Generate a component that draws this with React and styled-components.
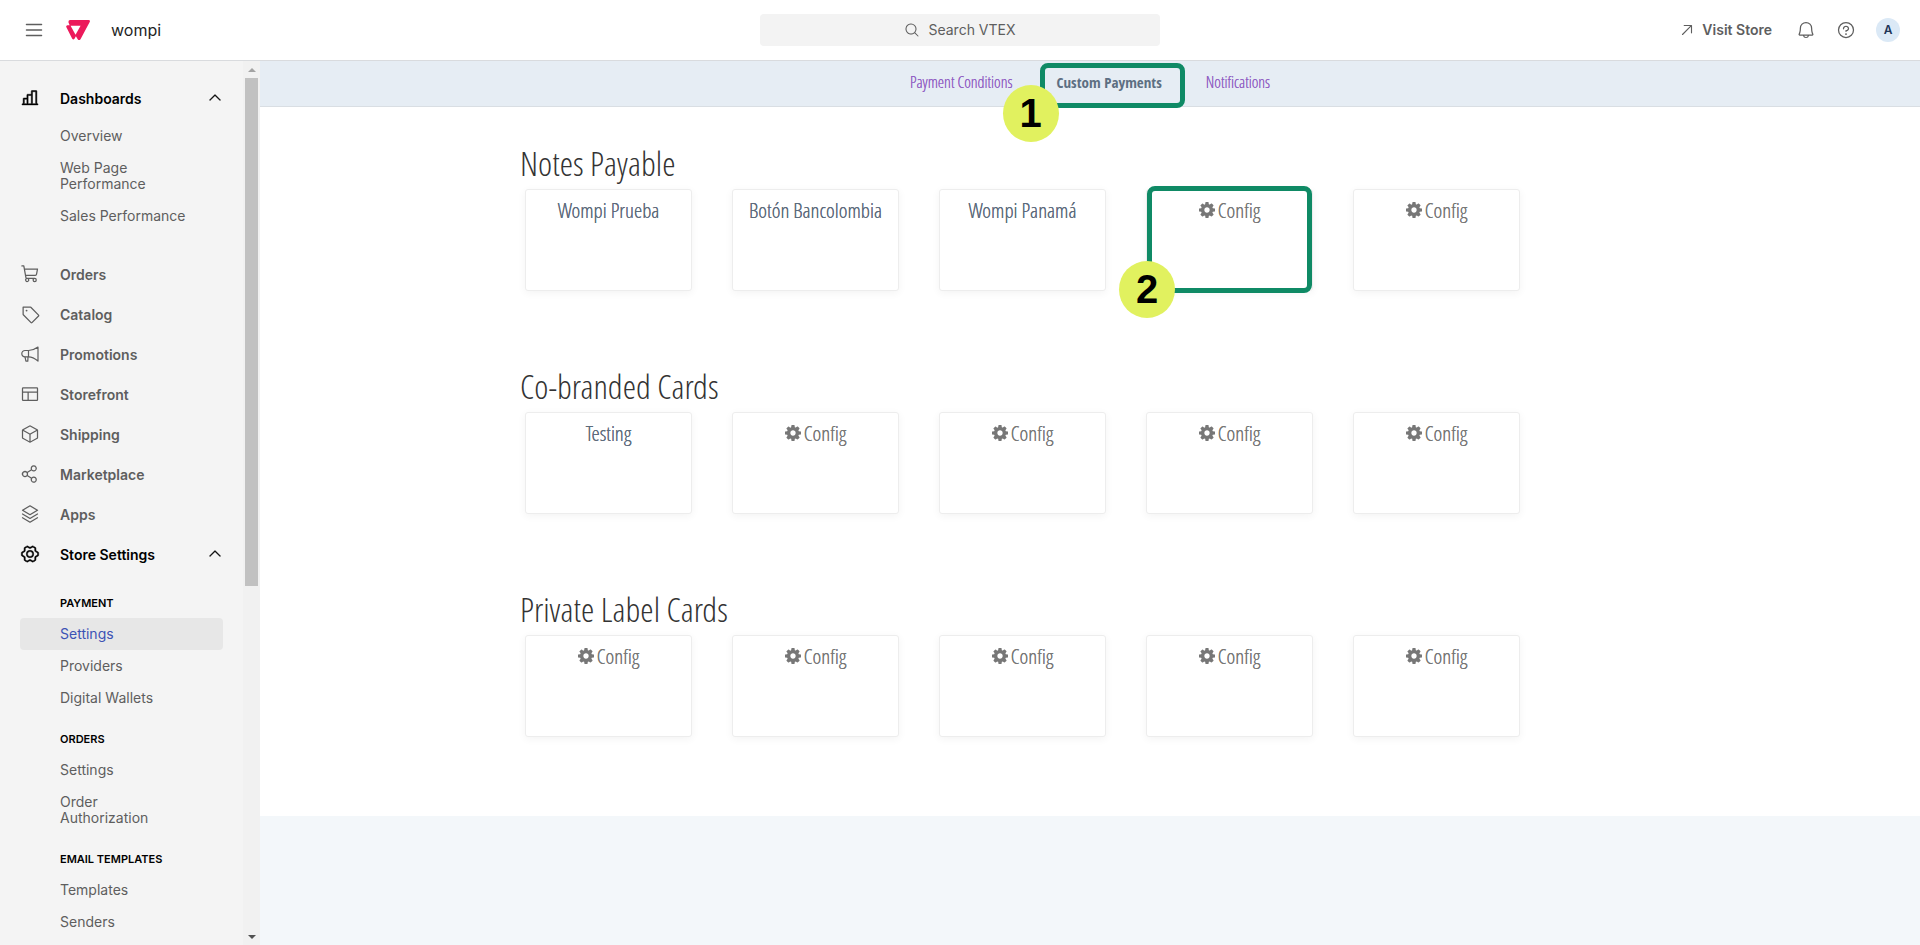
import styled, { createGlobalStyle } from 'styled-components'
import {
	PiArrowUpRight,
	PiBell,
	PiCaretUp,
	PiChartBar,
	PiCube,
	PiGearSix,
	PiLayout,
	PiList,
	PiMagnifyingGlass,
	PiQuestion,
	PiShareNetwork,
	PiShoppingCart,
	PiStack,
	PiTag
} from 'react-icons/pi'

const DASHBOARD_LINKS = ['Overview', 'Web Page Performance', 'Sales Performance']

const MENU = [
	{ label: 'Orders', Icon: PiShoppingCart },
	{ label: 'Catalog', Icon: PiTag },
	{ label: 'Promotions', Icon: Megaphone },
	{ label: 'Storefront', Icon: PiLayout },
	{ label: 'Shipping', Icon: PiCube },
	{ label: 'Marketplace', Icon: PiShareNetwork },
	{ label: 'Apps', Icon: PiStack }
]

const SETTINGS_GROUPS = [
	{ title: 'Payment', links: ['Settings', 'Providers', 'Digital Wallets'], active: 'Settings' },
	{ title: 'Orders', links: ['Settings', 'Order Authorization'] },
	{ title: 'Email Templates', links: ['Templates', 'Senders'] }
]

const SECTIONS = [
	{ title: 'Notes Payable', cards: ['Wompi Prueba', 'Botón Bancolombia', 'Wompi Panamá', null, null], step: 3 },
	{ title: 'Co-branded Cards', cards: ['Testing', null, null, null, null] },
	{ title: 'Private Label Cards', cards: [null, null, null, null, null] }
]

function Logo() {
	return (
		<svg width="24" height="22" viewBox="0 0 24 22" aria-label="VTEX">
			<path
				fill="#ec1a5b"
				d="M4 1H22.500Q24.600 1 23.700 2.900L14.500 20.200Q13.100 22 11.700 20.200L9.900 17.300L8.500 19.700Q7.200 21.300 6.100 19.500L.4 8.200Q-.3 6.600 1.400 6.200H3.600L2.500 3.400Q2.200 1.200 4 1Z"
			/>
			<path fill="#fff" d="M4.600 6.800H14.600L9.500 15.800Z" />
		</svg>
	)
}

function Megaphone({ size }) {
	return (
		<svg
			width={size}
			height={size}
			viewBox="0 0 20 20"
			fill="none"
			stroke="currentColor"
			strokeWidth="1.2"
			strokeLinejoin="round"
			aria-hidden="true"
		>
			<path d="M8.500 6.500H5a3.200 3.200 0 0 0 0 6.400H8.500C12 12.900 15.300 14.800 18 17V3C15.300 5 12 6.500 8.500 6.500Z" />
			<path d="M8.500 6.500V12.900M5 12.900L5.900 17.200H7.800L8 12.900" />
		</svg>
	)
}

function Cog() {
	return (
		<svg width="16" height="16" viewBox="0 0 1536 1536" fill="currentColor" aria-hidden="true">
			<path d="M1024 768q0-106-75-181t-181-75-181 75-75 181 75 181 181 75 181-75 75-181zm512-109v222q0 12-8 23t-20 13l-185 28q-19 54-39 91 35 50 107 138 10 12 10 25t-9 23q-27 37-99 108t-94 71q-12 0-26-9l-138-108q-44 23-91 38-16 136-29 186-7 28-36 28h-222q-14 0-24.500-8.500t-11.500-21.500l-28-184q-49-16-90-37l-141 107q-10 9-25 9-14 0-25-11-126-114-165-168-7-10-7-23 0-12 8-23 15-21 51-66.500t54-70.500q-27-50-41-99l-183-27q-13-2-21-12.500t-8-23.500v-222q0-12 8-23t19-13l186-28q14-46 39-92-40-57-107-138-10-12-10-24 0-10 9-23 26-36 98.500-107.500t94.500-71.500q13 0 26 10l138 107q44-23 91-38 16-136 29-186 7-28 36-28h222q14 0 24.500 8.500t11.500 21.500l28 184q49 16 90 37l142-107q9-9 24-9 13 0 25 10 129 119 165 170 7 8 7 22 0 12-8 23-15 21-51 66.500t-54 70.500q26 50 41 98l183 28q13 2 21 12.500t8 23.500z" />
		</svg>
	)
}

function Header() {
	return (
		<TopBar>
			<Brand>
				<IconButton aria-label="Menu"><PiList size={22} /></IconButton>
				<Logo />
				<AccountName>wompi</AccountName>
			</Brand>
			<SearchButton>
				<PiMagnifyingGlass size={16} />
				Search VTEX
			</SearchButton>
			<Actions>
				<StoreLink href="#">
					<PiArrowUpRight size={18} />
					Visit Store
				</StoreLink>
				<IconButton aria-label="Notifications"><PiBell size={20} /></IconButton>
				<IconButton aria-label="Help"><PiQuestion size={20} /></IconButton>
				<Avatar>A</Avatar>
			</Actions>
		</TopBar>
	)
}

function Sidebar() {
	return (
		<SidebarContainer>
			<Navigation>
				<MenuItem $open>
					<PiChartBar size={20} />
					<span>Dashboards</span>
					<PiCaretUp size={16} />
				</MenuItem>
				<LinkList>
					{DASHBOARD_LINKS.map((link) => (
						<li key={link}><SubLink href="#">{link}</SubLink></li>
					))}
				</LinkList>

				{MENU.map(({ label, Icon }) => (
					<MenuItem key={label}>
						<Icon size={20} />
						<span>{label}</span>
					</MenuItem>
				))}

				<MenuItem $open>
					<PiGearSix size={20} />
					<span>Store Settings</span>
					<PiCaretUp size={16} />
				</MenuItem>
				<Groups>
					{SETTINGS_GROUPS.map((group) => (
						<section key={group.title}>
							<GroupTitle>{group.title}</GroupTitle>
							{group.links.map((link) => (
								<SubLink key={link} href="#" $active={link === group.active}>{link}</SubLink>
							))}
						</section>
					))}
				</Groups>
			</Navigation>
			<Scrollbar aria-hidden="true">
				<Arrow $up />
				<Thumb />
				<Arrow />
			</Scrollbar>
		</SidebarContainer>
	)
}

function PaymentCard({ name, step }) {
	return (
		<Card>
			<CardLink href="#" $config={!name}>
				{name ? name : <><Cog /> Config</>}
			</CardLink>
			{step && <CardHighlight><Step>2</Step></CardHighlight>}
		</Card>
	)
}

export default function App() {
	return (
		<>
			<GlobalStyle />
			<Header />
			<Layout>
				<Sidebar />
				<Main>
					<Tabs>
						<Tab href="#">Payment Conditions</Tab>
						<Tab href="#" $active>
							Custom Payments
							<TabHighlight><Step>1</Step></TabHighlight>
						</Tab>
						<Tab href="#">Notifications</Tab>
					</Tabs>
					<Content>
						<Container>
							{SECTIONS.map((section) => (
								<Section key={section.title}>
									<h2>{section.title}</h2>
									<Cards>
										{section.cards.map((name, index) => (
											<PaymentCard key={index} name={name} step={section.step === index} />
										))}
									</Cards>
								</Section>
							))}
						</Container>
					</Content>
				</Main>
			</Layout>
		</>
	)
}

const GlobalStyle = createGlobalStyle`
	* {
		box-sizing: border-box;
	}
	body {
		margin: 0;
		font-family: Inter, "Liberation Sans", sans-serif;
		font-size: 14px;
		color: #5e5e5e;
		background-color: #f3f7fa;
	}
	a {
		text-decoration: none;
	}
	button {
		font: inherit;
		color: inherit;
		border: none;
		cursor: pointer;
	}
`

const TopBar = styled.header`
	display: grid;
	grid-template-columns: 1fr 400px 1fr;
	align-items: center;
	height: 61px;
	padding: 0 20px 1px;
	background-color: #fff;
	border-bottom: 1px solid #d9dbde;
`

const Brand = styled.div`
	display: flex;
	align-items: center;
	gap: 21px;
	padding-left: 3px;
`

const AccountName = styled.span`
	font-size: 16px;
	color: #1f1f1f;
`

const IconButton = styled.button`
	display: flex;
	padding: 0;
	background: none;
`

const SearchButton = styled.button`
	display: flex;
	align-items: center;
	justify-content: center;
	gap: 8px;
	height: 32px;
	border-radius: 4px;
	background-color: #f3f3f3;
`

const Actions = styled.div`
	display: flex;
	align-items: center;
	justify-content: flex-end;
	gap: 20px;
`

const StoreLink = styled.a`
	display: flex;
	align-items: center;
	gap: 6px;
	margin-right: 4px;
	font-weight: 600;
	color: #5e5e5e;
`

const Avatar = styled.button`
	width: 24px;
	height: 24px;
	padding: 0;
	border-radius: 50%;
	font-size: 12px;
	font-weight: 600;
	color: #1d3557;
	background-color: #dbe9f6;
`

const Layout = styled.div`
	display: flex;
	height: calc(100vh - 61px);
`

const SidebarContainer = styled.aside`
	display: flex;
	flex: 0 0 260px;
	background-color: #f4f4f4;
`

const Navigation = styled.nav`
	flex: 1;
	overflow: hidden;
	padding: 17px 20px 0;
`

const MenuItem = styled.button`
	display: flex;
	align-items: center;
	width: 100%;
	height: 40px;
	padding: 0;
	background: none;
	font-weight: 600;
	text-align: left;
	color: ${({ $open }) => ($open ? '#000' : '#5e5e5e')};
	span {
		flex: 1;
		padding-left: 20px;
	}
	svg {
		${({ $open }) => $open && 'stroke-width: 6px;'}
	}
`

const LinkList = styled.ul`
	list-style: none;
	margin: 0;
	padding: 2px 0 22px;
`

const SubLink = styled.a`
	display: block;
	padding: 8px 36px 8px 40px;
	border-radius: 4px;
	line-height: 16px;
	color: ${({ $active }) => ($active ? '#3d53b5' : '#5e5e5e')};
	background-color: ${({ $active }) => ($active ? '#e7e7e7' : 'transparent')};
`

const Groups = styled.div`
	padding-top: 4px;
`

const GroupTitle = styled.h3`
	margin: 0;
	padding: 17px 0 7px 40px;
	font-size: 11px;
	font-weight: 600;
	line-height: 16px;
	text-transform: uppercase;
	color: #000;
`

const Scrollbar = styled.div`
	display: flex;
	flex-direction: column;
	align-items: center;
	width: 17px;
	background-color: #f1f1f1;
`

const Arrow = styled.div`
	display: flex;
	align-items: center;
	height: 17px;
	margin-top: ${({ $up }) => ($up ? '0' : 'auto')};
	&::before {
		content: '';
		border: 4px solid transparent;
		border-top: ${({ $up }) => ($up ? 'none' : '4px solid #505050')};
		border-bottom: ${({ $up }) => ($up ? '4px solid #a3a3a3' : 'none')};
	}
`

const Thumb = styled.div`
	width: 13px;
	height: 508px;
	max-height: 58%;
	background-color: #c1c1c1;
`

const Main = styled.main`
	flex: 1;
	font-family: "Open Sans Condensed Light", "Open Sans Condensed", "Liberation Sans Narrow", sans-serif;
	font-weight: 300;
`

const Tabs = styled.nav`
	display: flex;
	justify-content: center;
	align-items: center;
	gap: 44px;
	height: 46px;
	padding-bottom: 4px;
	background-color: #e6edf4;
	border-bottom: 1px solid #d9dee3;
`

const Tab = styled.a`
	position: relative;
	font-family: ${({ $active }) => ($active ? '"Open Sans Condensed", sans-serif' : 'inherit')};
	font-size: ${({ $active }) => ($active ? '15px' : '16px')};
	line-height: 20px;
	font-weight: ${({ $active }) => ($active ? 700 : 300)};
	color: ${({ $active }) => ($active ? '#5d6f82' : '#9160c4')};
	text-shadow: ${({ $active }) => ($active ? 'none' : '0 0 0 currentColor')};
`

const Highlight = styled.div`
	position: absolute;
	border: 5px solid #0f8a65;
	border-radius: 8px;
`

const TabHighlight = styled(Highlight)`
	inset: -9px -23px -16px -17px;
`

const CardHighlight = styled(Highlight)`
	inset: -4px 0 -3px;
`

const Step = styled.span`
	position: absolute;
	left: -33px;
	bottom: -30px;
	display: flex;
	align-items: center;
	justify-content: center;
	width: 56px;
	height: 57px;
	border-radius: 50%;
	font-family: "Liberation Sans", sans-serif;
	font-size: 40px;
	font-weight: 700;
	color: #000;
	background-color: #e1f15f;
	${TabHighlight} & {
		left: -42px;
		bottom: -39px;
	}
`

const Content = styled.div`
	padding: 36px 0 4px;
	background-color: #fff;
`

const Container = styled.div`
	max-width: 1140px;
	margin: 0 auto;
`

const Section = styled.section`
	margin-bottom: 75px;
	h2 {
		margin: 0 0 6px;
		font-size: 34px;
		font-weight: 300;
		line-height: 40px;
		color: #333;
	}
`

const Cards = styled.div`
	display: grid;
	grid-template-columns: repeat(5, 167px);
	gap: 40px;
	padding-left: 5px;
`

const Card = styled.article`
	position: relative;
	height: 102px;
	padding-top: 9px;
	border: 1px solid #ededed;
	border-radius: 3px;
	text-align: center;
	background-color: #fff;
	box-shadow: 0 2px 8px rgba(0, 0, 0, 0.05);
`

const CardLink = styled.a`
	display: flex;
	align-items: center;
	justify-content: center;
	gap: 3px;
	font-size: 21px;
	line-height: 22px;
	color: ${({ $config }) => ($config ? '#777' : '#5d6b7c')};
	text-shadow: 0 0 0 currentColor;
`
